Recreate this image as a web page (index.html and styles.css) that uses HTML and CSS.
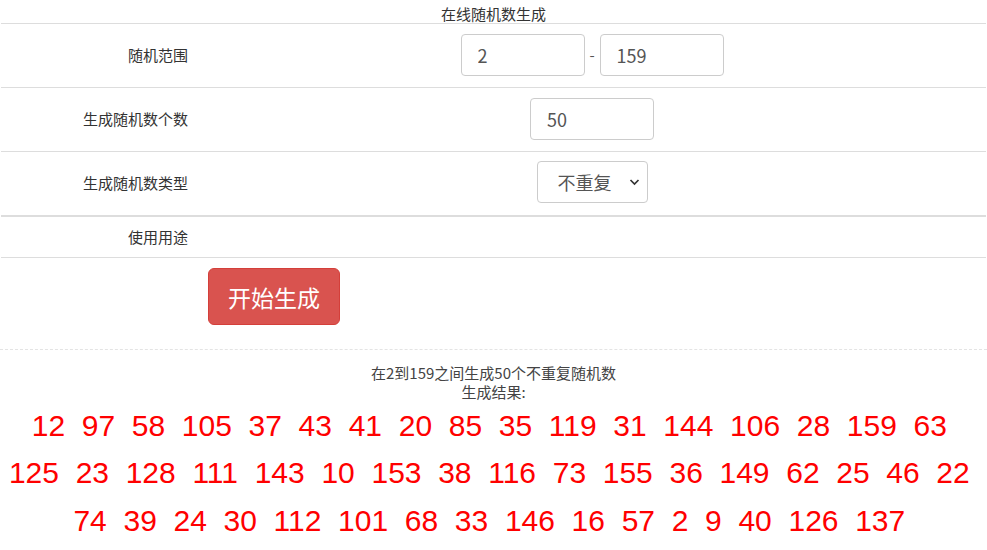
FILE: index.html
```html
<!DOCTYPE html>
<html lang="zh-CN">
<head>
<meta charset="utf-8">
<title>在线随机数生成</title>
<link rel="stylesheet" href="styles.css">
</head>
<body>
<div class="title">在线随机数生成</div>
<table class="form">
  <tr>
    <td class="label">随机范围</td>
    <td class="field"><input class="inp" type="text" value="2"><span class="dash">-</span><input class="inp" type="text" value="159"></td>
  </tr>
  <tr>
    <td class="label">生成随机数个数</td>
    <td class="field"><input class="inp" type="text" value="50"></td>
  </tr>
  <tr class="thick">
    <td class="label">生成随机数类型</td>
    <td class="field"><span class="sel-wrap"><select class="sel"><option>不重复</option><option>可重复</option></select><svg class="chev" width="11" height="8" viewBox="0 0 11 8"><path d="M1.5 2 L5.5 6 L9.5 2" fill="none" stroke="#333" stroke-width="1.7"/></svg></span></td>
  </tr>
  <tr class="short">
    <td class="label">使用用途</td>
    <td class="field"></td>
  </tr>
  <tr class="btn-row">
    <td></td>
    <td class="left"><button class="btn" type="button">开始生成</button></td>
  </tr>
</table>
<div class="result">
  <div class="info">在2到159之间生成50个不重复随机数</div>
  <div class="info">生成结果:</div>
  <div class="nums">12&nbsp; 97&nbsp; 58&nbsp; 105&nbsp; 37&nbsp; 43&nbsp; 41&nbsp; 20&nbsp; 85&nbsp; 35&nbsp; 119&nbsp; 31&nbsp; 144&nbsp; 106&nbsp; 28&nbsp; 159&nbsp; 63&nbsp; 125&nbsp; 23&nbsp; 128&nbsp; 111&nbsp; 143&nbsp; 10&nbsp; 153&nbsp; 38&nbsp; 116&nbsp; 73&nbsp; 155&nbsp; 36&nbsp; 149&nbsp; 62&nbsp; 25&nbsp; 46&nbsp; 22&nbsp; 74&nbsp; 39&nbsp; 24&nbsp; 30&nbsp; 112&nbsp; 101&nbsp; 68&nbsp; 33&nbsp; 146&nbsp; 16&nbsp; 57&nbsp; 2&nbsp; 9&nbsp; 40&nbsp; 126&nbsp; 137&nbsp; </div>
</div>
</body>
</html>
```
FILE: styles.css
```css
* { box-sizing: border-box; }
html, body { margin: 0; padding: 0; background: #fff; }
body {
  font-family: "Noto Sans CJK SC", "Noto Sans", sans-serif;
  font-size: 15px;
  color: #333;
}
.title {
  text-align: center;
  height: 23px;
  line-height: 19px;
  padding-top: 4px;
}
.form {
  width: 985px;
  margin: 0 1px;
  border-collapse: collapse;
}
.form td {
  border-top: 1px solid #ddd;
  padding: 9px 0 11px 0;
  height: 64px;
  vertical-align: middle;
}
.form td.label {
  width: 197px;
  text-align: right;
  padding-right: 10px;
}
.form td.field { text-align: center; }
.form td.left { text-align: left; padding-left: 10px; }
.form tr.thick td { border-bottom: 2px solid #ddd; }
.form tr.short td { height: 42px; padding-top: 0; padding-bottom: 0; }
.form tr.btn-row td { height: 91px; padding: 10px 0 22px 10px; vertical-align: top; }
.inp {
  width: 124px;
  height: 42px;
  border: 1px solid #ccc;
  border-radius: 4px;
  padding: 0 16px;
  font-family: "Noto Sans CJK SC", "Noto Sans", sans-serif;
  font-size: 18px;
  color: #555;
  vertical-align: middle;
  outline: none;
}
.dash {
  display: inline-block;
  width: 15px;
  text-align: center;
  color: #555;
  vertical-align: middle;
}
.sel-wrap {
  position: relative;
  display: inline-block;
  vertical-align: middle;
}
.sel {
  -webkit-appearance: none;
  appearance: none;
  width: 111px;
  height: 42px;
  border: 1px solid #ccc;
  border-radius: 4px;
  background: #fff;
  padding: 0 0 0 20px;
  font-family: "Noto Sans CJK SC", "Noto Sans", sans-serif;
  font-size: 18px;
  color: #555;
  display: block;
  outline: none;
}
.chev {
  position: absolute;
  right: 8px;
  top: 17px;
  pointer-events: none;
}
.btn {
  width: 132px;
  height: 57px;
  background: #d9534f;
  border: 1px solid #d43f3a;
  border-radius: 6px;
  color: #fff;
  font-family: "Noto Sans CJK SC", "Noto Sans", sans-serif;
  font-size: 23px;
  padding: 0;
}
.result {
  border-top: 1px dashed #e4e4e4;
  padding-top: 14px;
  text-align: center;
}
.info {
  line-height: 18px;
  font-size: 15px;
  color: #444;
}
.info + .info { margin-top: 1px; }
.nums {
  font-family: "Liberation Sans", Arial, sans-serif;
  font-size: 30px;
  color: #ff0000;
  line-height: 47.5px;
  margin-top: 1px;
}
```
